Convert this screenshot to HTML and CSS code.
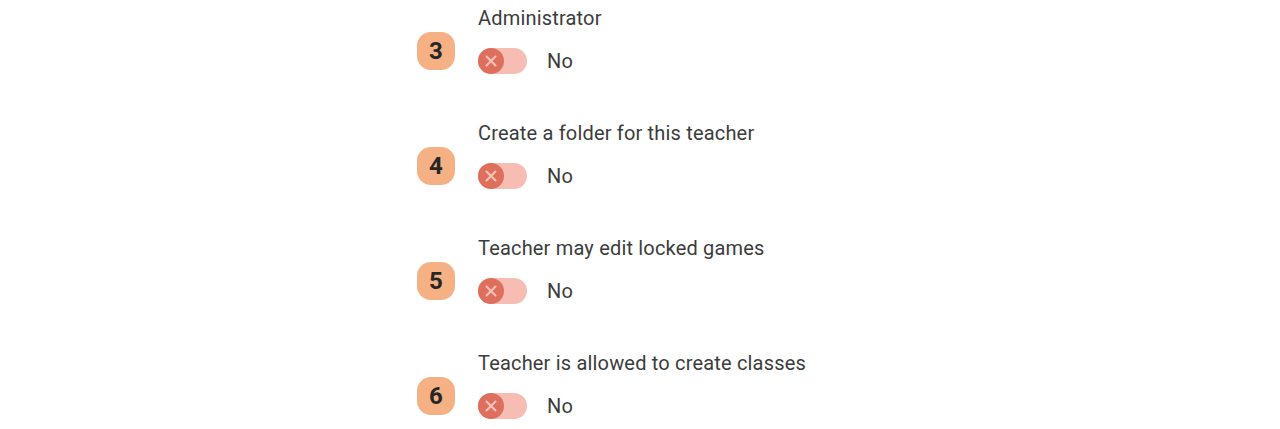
FILE: index.html
```html
<!DOCTYPE html>
<html lang="en">
<head>
<meta charset="utf-8">
<title>Teacher permissions</title>
<link rel="stylesheet" href="styles.css">
</head>
<body>
<main class="settings">
  <div class="setting">
    <div class="step">3</div>
    <div class="field">
      <div class="label">Administrator</div>
      <div class="switch-row">
        <span class="switch"><span class="knob"><svg viewBox="0 0 26 26"><path d="M8.5 8.5l9 9M17.5 8.5l-9 9"/></svg></span></span>
        <span class="value">No</span>
      </div>
    </div>
  </div>
  <div class="setting">
    <div class="step">4</div>
    <div class="field">
      <div class="label">Create a folder for this teacher</div>
      <div class="switch-row">
        <span class="switch"><span class="knob"><svg viewBox="0 0 26 26"><path d="M8.5 8.5l9 9M17.5 8.5l-9 9"/></svg></span></span>
        <span class="value">No</span>
      </div>
    </div>
  </div>
  <div class="setting">
    <div class="step">5</div>
    <div class="field">
      <div class="label">Teacher may edit locked games</div>
      <div class="switch-row">
        <span class="switch"><span class="knob"><svg viewBox="0 0 26 26"><path d="M8.5 8.5l9 9M17.5 8.5l-9 9"/></svg></span></span>
        <span class="value">No</span>
      </div>
    </div>
  </div>
  <div class="setting">
    <div class="step">6</div>
    <div class="field">
      <div class="label">Teacher is allowed to create classes</div>
      <div class="switch-row">
        <span class="switch"><span class="knob"><svg viewBox="0 0 26 26"><path d="M8.5 8.5l9 9M17.5 8.5l-9 9"/></svg></span></span>
        <span class="value">No</span>
      </div>
    </div>
  </div>
</main>
</body>
</html>
```

FILE: styles.css
```css
html, body {
  margin: 0;
  padding: 0;
  background: #ffffff;
}

body {
  font-family: Roboto, "Liberation Sans", sans-serif;
  color: #3a3a3a;
}

.settings {
  display: flex;
  flex-direction: column;
  gap: 47px;
  padding: 6px 0 0 417px;
}

.setting {
  display: flex;
  align-items: flex-start;
  gap: 23px;
}

.step {
  width: 38px;
  height: 38px;
  margin-top: 26px;
  border-radius: 14px;
  background: #f5b183;
  color: #262626;
  font-weight: 700;
  font-size: 24px;
  display: flex;
  align-items: center;
  justify-content: center;
  flex: none;
}

.field {
  display: flex;
  flex-direction: column;
}

.label {
  font-size: 20px;
  line-height: 24px;
  letter-spacing: 0.18px;
  color: #3c3c3c;
}

.switch-row {
  display: flex;
  align-items: center;
  gap: 20px;
  margin-top: 18px;
}

.switch {
  width: 49px;
  height: 26px;
  border-radius: 13px;
  background: #f7bdb3;
  display: flex;
  align-items: center;
}

.knob {
  width: 26px;
  height: 26px;
  border-radius: 50%;
  background: #de6f5c;
  display: flex;
}

.knob svg {
  width: 26px;
  height: 26px;
}

.knob path {
  stroke: #f8c4ba;
  stroke-width: 2;
  stroke-linecap: round;
  fill: none;
}

.value {
  font-size: 20px;
  line-height: 24px;
  letter-spacing: 0.18px;
  color: #3c3c3c;
}
```
